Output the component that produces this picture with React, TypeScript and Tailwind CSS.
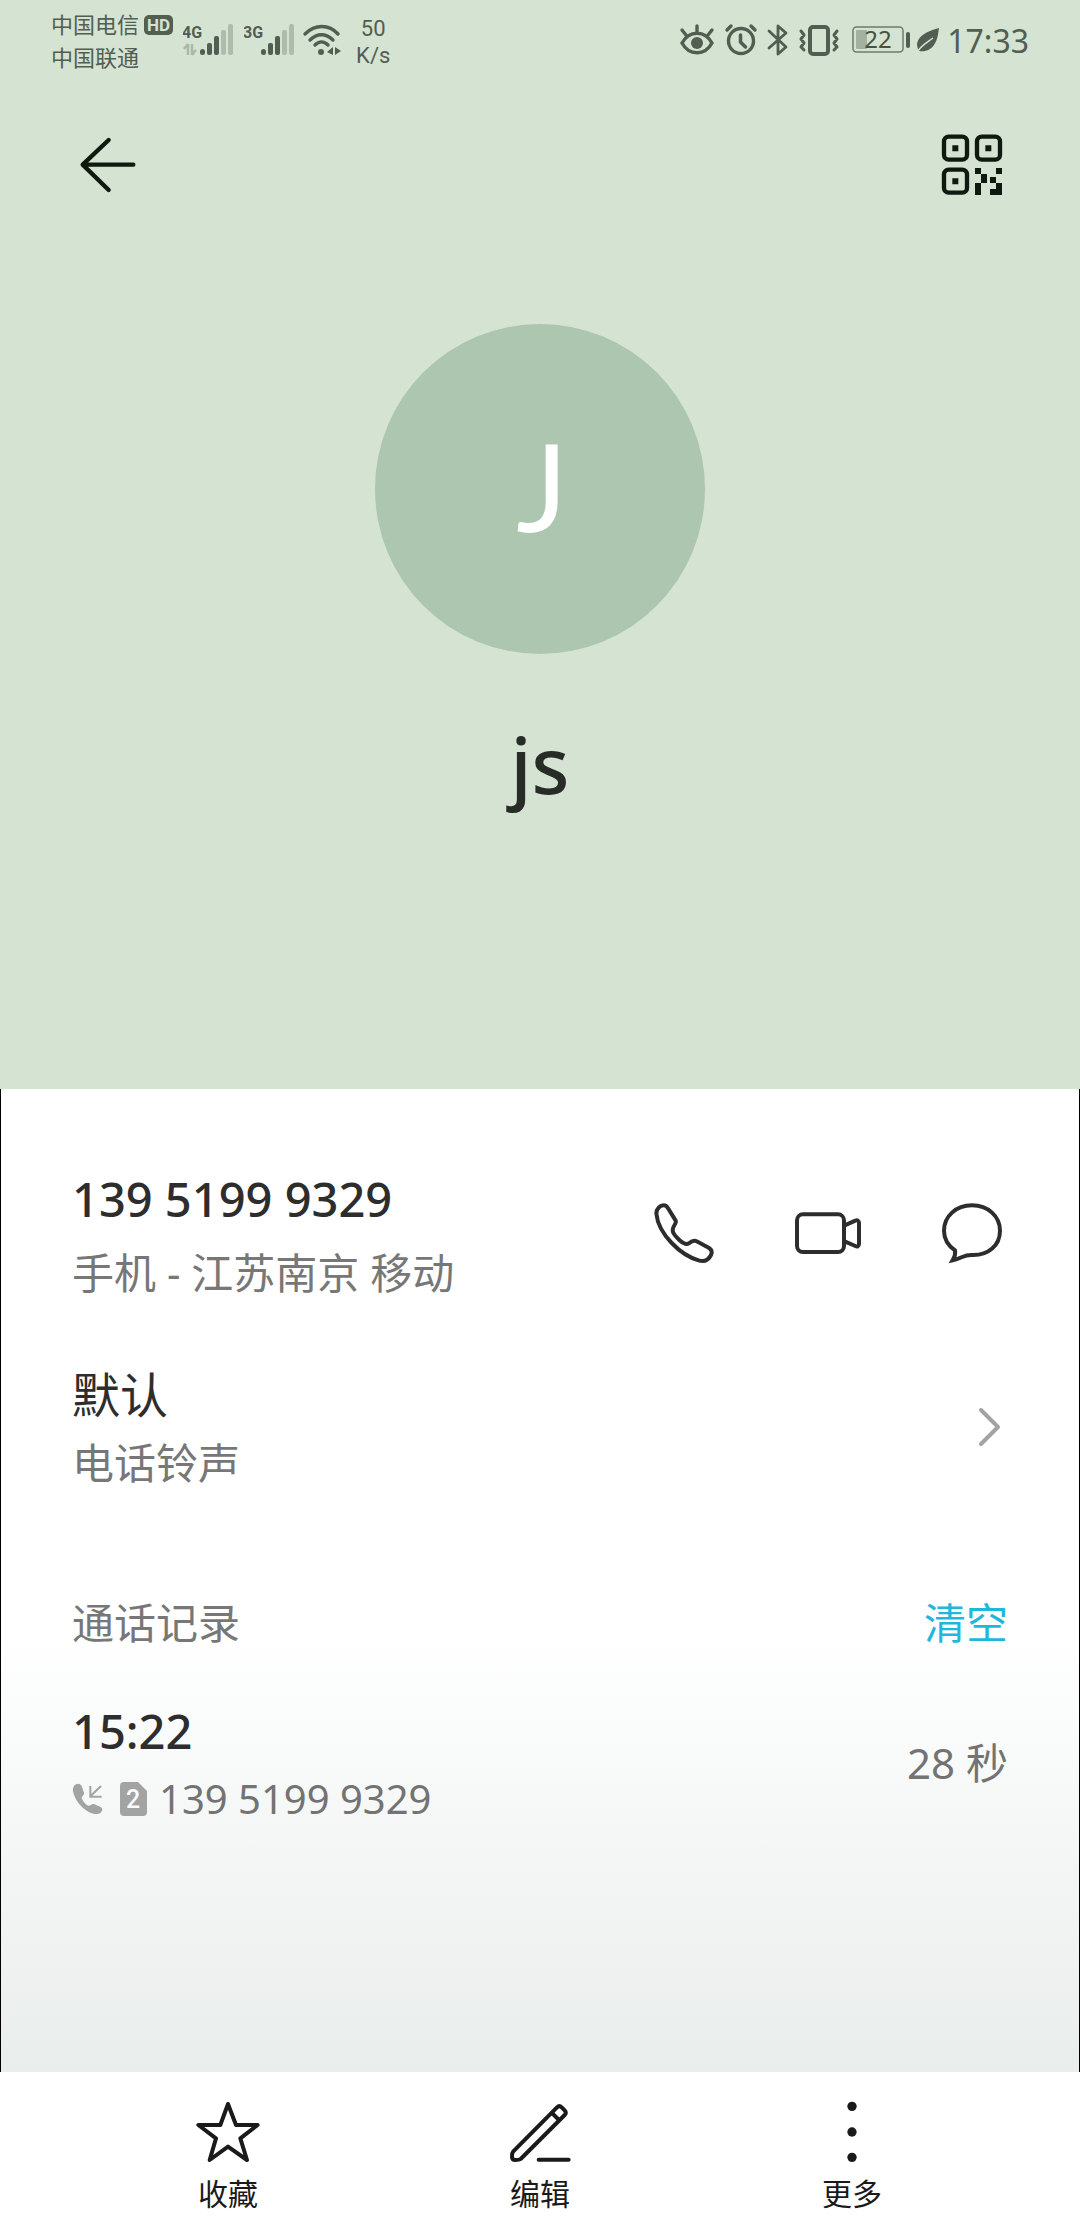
import React from "react";

function CellularIcon({ label, data }: { label: string; data?: boolean }) {
  return (
    <svg width="52" height="40" viewBox="0 0 52 40" fill="#525e51" role="img" aria-label={`${label} signal`}>
      <text x="-1" y="18" fontFamily="Roboto, sans-serif" fontSize="16" fontWeight="700">
        {label}
      </text>
      {data && (
        <path d="M5 24v11M5 24l-4 5M9 24v11M9 35l4-5" stroke="#a9b9a8" strokeWidth="2.5" fill="none" />
      )}
      <rect x="17" y="29" width="5" height="6" rx="2.5" />
      <rect x="24" y="23" width="5" height="12" rx="2" />
      <rect x="31" y="16" width="5" height="19" rx="2" />
      <rect x="38" y="10" width="5" height="25" rx="2" fill="#adbcac" />
      <rect x="45" y="4" width="5" height="31" rx="2" fill="#adbcac" />
    </svg>
  );
}

function WifiIcon() {
  return (
    <svg width="40" height="40" viewBox="0 0 40 40" fill="none" stroke="#525e51" strokeWidth="3.4" strokeLinecap="round" role="img" aria-label="Wi-Fi">
      <path d="M3 14C13 4 27 4 36 14M8 20C15 13 24 13 31 20M13 25C17 21 22 21 26 25" />
      <circle cx="19" cy="32" r="3" fill="#525e51" stroke="none" />
      <path d="M31 27v8l-6-3zM33 27v8l6-4z" fill="#525e51" stroke="none" />
    </svg>
  );
}

function EyeIcon() {
  return (
    <svg width="36" height="34" viewBox="0 0 36 34" fill="none" stroke="#525e51" strokeWidth="3.4" strokeLinecap="round" role="img" aria-label="Eye comfort">
      <path d="M3 20C10 7 26 7 33 20C26 33 10 33 3 20Z" />
      <path d="M18 9V3M7 12L3 7M29 12l4-5" />
      <circle cx="18" cy="20" r="6" fill="#525e51" stroke="none" />
    </svg>
  );
}

function AlarmIcon() {
  return (
    <svg width="34" height="34" viewBox="0 0 34 34" fill="none" stroke="#525e51" strokeWidth="3.4" strokeLinecap="round" role="img" aria-label="Alarm">
      <circle cx="17" cy="18" r="12.5" />
      <path d="M3 7l4-4M31 7l-4-4" />
      <path d="M16.5 12v7l5 5" strokeWidth="3.5" />
    </svg>
  );
}

function BluetoothIcon() {
  return (
    <svg width="22" height="34" viewBox="0 0 22 34" fill="none" stroke="#525e51" strokeWidth="2.8" strokeLinejoin="round" strokeLinecap="round" role="img" aria-label="Bluetooth">
      <path d="M2 8L19 24L11 31V3L19 10L2 25" />
    </svg>
  );
}

function VibrateIcon() {
  return (
    <svg width="42" height="34" viewBox="0 0 42 34" fill="none" stroke="#525e51" strokeWidth="4" strokeLinecap="round" strokeLinejoin="round" role="img" aria-label="Vibrate">
      <rect x="12" y="4" width="18" height="27" rx="3" />
      <path d="M3 8l3 4-3 4 3 4-3 4 3 3M39 8l-3 4 3 4-3 4 3 4-3 3" strokeWidth="3" />
    </svg>
  );
}

function BatteryIcon() {
  return (
    <svg width="60" height="40" viewBox="0 -5 60 40" role="img" aria-label="Battery 22 percent">
      <rect x="1" y="2" width="50" height="25" rx="3.5" fill="none" stroke="#6f7b6e" strokeWidth="1.5" />
      <rect x="4" y="5" width="11" height="19" rx="1" fill="#a3b1a2" />
      <rect x="54" y="7" width="4" height="16" rx="2" fill="#525e51" />
      <text x="26" y="23" textAnchor="middle" fontFamily="'Noto Sans', sans-serif" fontSize="24" fill="#47523f">
        22
      </text>
    </svg>
  );
}

function LeafIcon() {
  return (
    <svg width="24" height="28" viewBox="0 0 24 28" role="img" aria-label="Power saving">
      <path d="M23 2C11 5 2 10 1 18C1 21 2 23 3 25C7 26 14 25 18 19C22 13 22 8 23 2Z" fill="#525e51" />
      <path d="M2 25C6 19 12 16 17 12" stroke="#d5e3d3" strokeWidth="1.5" fill="none" />
    </svg>
  );
}

function StatusBar() {
  return (
    <div className="flex h-20 items-center justify-between pr-[51px] pl-[51px] text-[#525e51]">
      <div className="flex items-center">
        <div className="pt-0.5 text-[22px] leading-[33px]">
          <div className="flex items-center gap-[5px]">
            <span>中国电信</span>
            <span className="rounded-[5px] bg-[#525e51] px-[3px] font-[Roboto] text-[17px] leading-[20px] font-bold text-[#d5e3d3]">
              HD
            </span>
          </div>
          <div>中国联通</div>
        </div>
        <div className="ml-[10px] flex items-center gap-[9px]">
          <CellularIcon label="4G" data />
          <CellularIcon label="3G" />
        </div>
        <div className="ml-[6px] flex items-center gap-[14px]">
          <WifiIcon />
          <div className="pt-[3px] text-center font-[Roboto] text-[22px] leading-[27px]">
            <div>50</div>
            <div>K/s</div>
          </div>
        </div>
      </div>
      <div className="flex items-center">
        <div className="flex items-center gap-[9px]">
          <EyeIcon />
          <AlarmIcon />
          <BluetoothIcon />
          <VibrateIcon />
        </div>
        <div className="ml-[12px] flex items-center gap-[4px]">
          <BatteryIcon />
          <LeafIcon />
        </div>
        <span className="ml-[7px] pt-0.5 text-[32px] leading-10">17:33</span>
      </div>
    </div>
  );
}

function BackIcon() {
  return (
    <svg className="size-[72px]" viewBox="36 27 216 216" fill="none" stroke="#0f190f" strokeWidth="13" strokeLinecap="round" strokeLinejoin="round" aria-hidden="true">
      <path d="M146 60L68 134L146 210M70 134H220" />
    </svg>
  );
}

function QrIcon() {
  return (
    <svg className="size-[72px]" viewBox="48 27 216 216" fill="#0f190f" aria-hidden="true">
      <g fill="none" stroke="#0f190f" strokeWidth="13">
        <rect x="72" y="50" width="69" height="69" rx="14" />
        <rect x="171" y="50" width="69" height="69" rx="14" />
        <rect x="72" y="149" width="69" height="69" rx="14" />
      </g>
      <path d="M97 76h18v18h-18zM196 76h18v18h-18zM97 175h18v18h-18z" />
      <path d="M165 144h18v18h-18zM228 144h18v18h-18zM183 162h18v27h-18zM210 171h18v18h-18zM165 189h18v36h-18zM228 189h18v36h-36v-18h18z" />
    </svg>
  );
}

function PhoneIcon() {
  return (
    <svg className="size-[72px]" viewBox="84 80 216 216" fill="none" stroke="#2d2d2d" strokeWidth="12" strokeLinejoin="round" aria-hidden="true">
      <path d="M109 130C109 115 120 105 131 105C140 105 143 112 146 117L167 151C171 160 158 165 158 180C158 188 166 198 178 209C190 220 198 224 207 219C214 213 222 208 230 213L266 232C276 238 277 246 273 254C266 268 254 275 238 271C205 262 180 244 155 218C128 190 112 160 109 130Z" />
    </svg>
  );
}

function VideoIcon() {
  return (
    <svg className="size-[72px]" viewBox="516 80 216 216" fill="none" stroke="#2d2d2d" strokeWidth="12" strokeLinejoin="round" aria-hidden="true">
      <rect x="531" y="132" width="141" height="113" rx="18" />
      <path d="M674 165L706 151C712 148 717 151 717 158V220C717 228 712 230 706 227L674 213" />
    </svg>
  );
}

function MessageIcon() {
  return (
    <svg className="size-[72px]" viewBox="948 80 216 216" fill="none" stroke="#2d2d2d" strokeWidth="12" aria-hidden="true">
      <path d="M1056 105C1104 105 1140 138 1140 181C1140 226 1104 254 1060 254C1033 251 1028 263 998 270C1004 260 1007 252 1005 240C985 226 972 208 972 181C972 138 1008 105 1056 105Z" />
    </svg>
  );
}

function ChevronIcon() {
  return (
    <svg className="h-[48px] w-[36px]" viewBox="0 0 36 48" fill="none" stroke="#a3a3a3" strokeWidth="4" strokeLinecap="round" strokeLinejoin="round" aria-hidden="true">
      <path d="M9 6L26 23L9 40" />
    </svg>
  );
}

function IncomingCallIcon() {
  return (
    <svg className="h-[34px] w-[32px]" viewBox="72 600 96 102" fill="#a3a3a3" role="img" aria-label="Incoming call">
      <path d="M84 607C92 603 98 606 101 613L108 632C110 639 100 642 101 648C104 658 112 666 120 671C126 673 131 664 138 666L158 675C166 680 163 688 157 693C149 699 134 696 121 689C99 676 82 655 76 632C73 621 76 611 84 607Z" />
      <path d="M159 612L127 643M127 612V644H161" fill="none" stroke="#a3a3a3" strokeWidth="6" />
    </svg>
  );
}

function SimIcon() {
  return (
    <svg className="h-[34px] w-[27px]" viewBox="0 0 27 34" role="img" aria-label="SIM 2">
      <path d="M4 0H18L27 9V30Q27 34 23 34H4Q0 34 0 30V4Q0 0 4 0Z" fill="#a3a3a3" />
      <text x="13" y="26" textAnchor="middle" fontFamily="Roboto, sans-serif" fontSize="25" fontWeight="500" fill="#fbfcfc">
        2
      </text>
    </svg>
  );
}

function StarIcon() {
  return (
    <svg className="size-[72px]" viewBox="96 108 216 216" fill="none" stroke="#1a1a1a" strokeWidth="12" strokeLinejoin="round" aria-hidden="true">
      <path d="M204 132L228 195H293L241 235L261 300L204 260L149 300L168 235L115 195H181Z" />
    </svg>
  );
}

function EditIcon() {
  return (
    <svg className="size-[72px]" viewBox="1032 108 216 216" fill="none" stroke="#1a1a1a" strokeWidth="12" strokeLinejoin="round" strokeLinecap="round" aria-hidden="true">
      <path d="M1060 274L1191 142Q1198 135 1205 142L1214 151Q1221 158 1214 165L1082 297Q1078 300 1066 300Q1056 300 1056 290Q1055 280 1060 274ZM1177 160L1197 180M1136 299H1226" />
    </svg>
  );
}

function MoreIcon() {
  return (
    <svg className="size-[72px]" viewBox="108 108 216 216" fill="#1a1a1a" aria-hidden="true">
      <circle cx="216" cy="139" r="14" />
      <circle cx="216" cy="216" r="14" />
      <circle cx="216" cy="292" r="14" />
    </svg>
  );
}

const actions = [
  { label: "收藏", Icon: StarIcon },
  { label: "编辑", Icon: EditIcon },
  { label: "更多", Icon: MoreIcon },
];

export default function App() {
  return (
    <div className="flex min-h-screen flex-col bg-white font-['Noto_Sans','Noto_Sans_CJK_SC',sans-serif] text-[#2d2d2d]">
      <header className="bg-[#d5e3d3] pb-[269px]">
        <StatusBar />
        <div className="flex h-[170px] items-center justify-between px-[72px]">
          <button aria-label="返回">
            <BackIcon />
          </button>
          <button aria-label="二维码">
            <QrIcon />
          </button>
        </div>
        <div className="flex flex-col items-center pt-[74px]">
          <div className="flex size-[330px] items-center justify-center rounded-full bg-[#adc6b0] pb-2 pl-1 font-[Lato] text-[122px] leading-none text-white">
            J
          </div>
          <h1 className="mt-[54px] text-[78px] leading-[112px] font-medium text-[#282c27]">js</h1>
        </div>
      </header>

      <main className="flex-1 border-x border-black bg-linear-to-b from-white from-55% to-[#e9edec] px-[71px] pt-20">
        <section className="flex items-center justify-between">
          <div>
            <div className="text-[47px] leading-[60px] font-medium">139 5199 9329</div>
            <div className="mt-3.5 text-[42px] leading-[60px] text-[#777777]">手机 - 江苏南京 移动</div>
          </div>
          <div className="flex gap-[72px] pb-1.5">
            <button aria-label="拨打电话">
              <PhoneIcon />
            </button>
            <button aria-label="视频通话">
              <VideoIcon />
            </button>
            <button aria-label="发送信息">
              <MessageIcon />
            </button>
          </div>
        </section>

        <button className="mt-[60px] flex w-full items-center justify-between text-left">
          <span className="flex flex-col gap-1.5">
            <span className="text-[48px] leading-[64px]">默认</span>
            <span className="text-[42px] leading-[60px] text-[#777777]">电话铃声</span>
          </span>
          <ChevronIcon />
        </button>

        <section className="mt-[100px]">
          <div className="flex items-center justify-between text-[42px] leading-[60px]">
            <h2 className="text-[#777777]">通话记录</h2>
            <button className="text-[#1fb8dc]">清空</button>
          </div>
          <div className="mt-12 flex items-center justify-between">
            <div>
              <div className="text-[47px] leading-[60px] font-medium">15:22</div>
              <div className="mt-2 flex items-center text-[40px] leading-[60px] text-[#737373]">
                <IncomingCallIcon />
                <span className="mr-3 ml-4 flex">
                  <SimIcon />
                </span>
                <span>139 5199 9329</span>
              </div>
            </div>
            <div className="pb-1 text-[42px] leading-[60px] text-[#737373]">28 秒</div>
          </div>
        </section>
      </main>

      <nav className="grid grid-cols-3 bg-white px-[72px] pt-6 pb-7 text-[#1a1a1a]">
        {actions.map(({ label, Icon }) => (
          <button key={label} className="flex flex-col items-center gap-2 text-[30px] leading-9">
            <Icon />
            <span>{label}</span>
          </button>
        ))}
      </nav>
    </div>
  );
}
